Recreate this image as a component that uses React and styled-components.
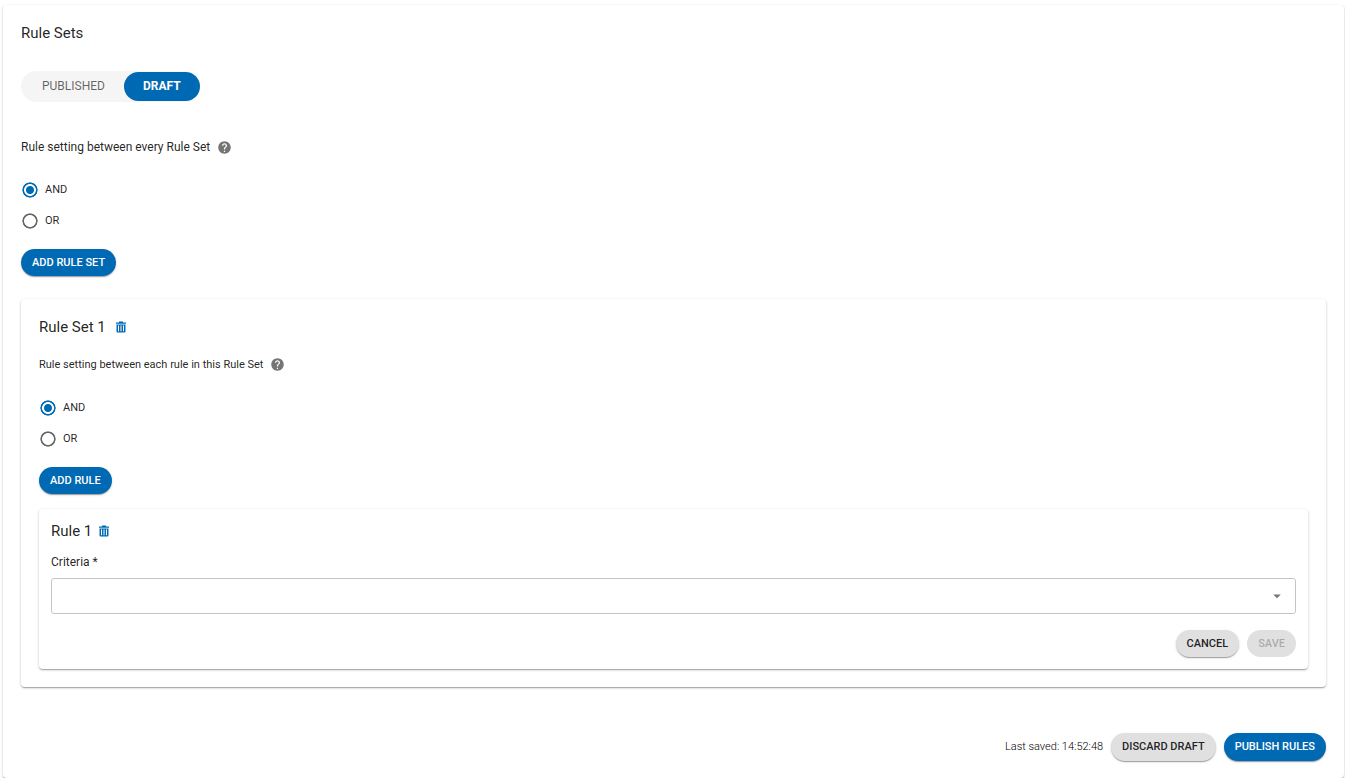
import React, { useState } from 'react';
import styled, { createGlobalStyle } from 'styled-components';
import { MdHelp, MdArrowDropDown } from 'react-icons/md';

const GlobalStyle = createGlobalStyle`
  * {
    box-sizing: border-box;
  }

  body {
    margin: 0;
    padding: 5px 1px 0 3px;
    background-color: #fff;
    color: rgba(0, 0, 0, 0.87);
    font-family: Roboto, Arial, sans-serif;
    font-size: 11px;
  }

  button, select {
    font-family: inherit;
  }
`;

const Card = styled.section`
  background-color: #fff;
  border-radius: 4px;
  box-shadow: 0 1px 3px 0 rgba(0, 0, 0, 0.2),
    0 1px 1px 0 rgba(0, 0, 0, 0.14),
    0 2px 1px -1px rgba(0, 0, 0, 0.12);
`;

const PageCard = styled(Card)`
  padding: 18px 18px 17px;
`;

const RuleSetCard = styled(Card)`
  margin-top: 23px;
  padding: 18px;
`;

const RuleCard = styled(Card)`
  margin-top: 15px;
  padding: 12px;
`;

const Title = styled.h2`
  margin: 0;
  font-size: 15px;
  font-weight: 400;
  line-height: 20px;
`;

const TitleRow = styled.div`
  display: flex;
  align-items: center;
  gap: ${(props) => props.$gap}px;
`;

const IconButton = styled.button`
  display: flex;
  padding: 0;
  border: none;
  background: none;
  color: #0069b4;
  cursor: pointer;
`;

const HelpButton = styled(IconButton)`
  color: #757575;
`;

const Toggle = styled.div`
  display: flex;
  align-items: center;
  width: fit-content;
  height: 31px;
  margin-top: 28px;
  border-radius: 16px;
  background-color: #f5f5f5;
`;

const ToggleButton = styled.button`
  height: 29px;
  padding: 0 19px 2px;
  border: none;
  border-radius: 15px;
  background-color: ${(props) => (props.$active ? '#0069b4' : 'transparent')};
  color: ${(props) => (props.$active ? '#fff' : 'rgba(0, 0, 0, 0.6)')};
  font-size: 12px;
  font-weight: ${(props) => (props.$active ? 700 : 400)};
  text-transform: uppercase;
  cursor: pointer;

  &:first-child {
    padding-left: 21px;
  }
`;

const RadioGroup = styled.fieldset`
  min-width: 0;
  margin: ${(props) => (props.$nested ? 17 : 35)}px 0 0;
  padding: 0;
  border: none;
`;

const Legend = styled.legend`
  display: flex;
  align-items: center;
  gap: 7px;
  height: 20px;
  margin-bottom: ${(props) => (props.$nested ? 18 : 17)}px;
  padding: 0;
  font-size: ${(props) => (props.$nested ? 11 : 12)}px;
`;

const RadioLabel = styled.label`
  display: flex;
  align-items: center;
  gap: 7px;
  width: fit-content;
  height: 31px;
  padding-left: 1px;
  cursor: pointer;
`;

const Radio = styled.input`
  appearance: none;
  width: 16px;
  height: 16px;
  margin: 0;
  border-radius: 50%;
  background: radial-gradient(circle closest-side, transparent 69%, #666 79%, #666 91%, transparent 100%);

  &:checked {
    background: radial-gradient(
      circle closest-side,
      #0069b4 44%,
      transparent 56%,
      transparent 69%,
      #0069b4 79%,
      #0069b4 91%,
      transparent 100%
    );
  }
`;

const Button = styled.button`
  height: ${(props) => (props.$tall ? 28 : 27)}px;
  padding: ${(props) => (props.$tall ? '0 11px 2px' : '0 11px')};
  border: none;
  border-radius: 14px;
  background-color: ${(props) => (props.$primary ? '#0069b4' : '#e0e0e0')};
  color: ${(props) => (props.$primary ? '#fff' : 'rgba(0, 0, 0, 0.87)')};
  font-size: 11px;
  font-weight: 500;
  text-transform: uppercase;
  cursor: pointer;
  box-shadow: 0 2px 1px -1px rgba(0, 0, 0, 0.2),
    0 1px 1px 0 rgba(0, 0, 0, 0.14),
    0 1px 3px 0 rgba(0, 0, 0, 0.12);

  &:disabled {
    color: rgba(0, 0, 0, 0.26);
    box-shadow: none;
    cursor: default;
  }
`;

const AddButton = styled(Button)`
  display: block;
  margin-top: 13px;
`;

const FieldLabel = styled.label`
  display: block;
  margin: 13px 0 8px;
  font-size: 12px;
  line-height: 16px;
`;

const SelectBox = styled.div`
  display: grid;
  align-items: center;

  & > * {
    grid-area: 1 / 1;
  }

  svg {
    justify-self: end;
    margin-right: 10px;
    color: #757575;
    pointer-events: none;
  }
`;

const Select = styled.select`
  appearance: none;
  width: 100%;
  height: 36px;
  padding: 0 32px 0 12px;
  border: 1px solid #c4c4c4;
  border-radius: 3px;
  background-color: #fff;
  font-size: 12px;
`;

const Actions = styled.div`
  display: flex;
  align-items: center;
  justify-content: flex-end;
  gap: 8px;
  margin-top: ${(props) => (props.$footer ? 46 : 16)}px;
`;

const SavedAt = styled.span`
  padding-bottom: 2px;
  color: #000;
  font-weight: 300;
`;

const TrashIcon = () => (
  <svg width="10" height="12" viewBox="0 0 10 12" fill="currentColor" aria-hidden="true">
    <path d="M3 0.5h4v1h3v1.3H0V1.5h3z" />
    <path
      fillRule="evenodd"
      d="M0.5 3.4h9v7.2a1 1 0 0 1-1 1H1.5a1 1 0 0 1-1-1zM2 4.6v5.7h1V4.6zM4.5 4.6v5.7h1V4.6zM7 4.6v5.7h1V4.6z"
    />
  </svg>
);

const RuleSetting = ({ name, text, nested }) => {
  const [value, setValue] = useState('AND');

  return (
    <RadioGroup $nested={nested}>
      <Legend $nested={nested}>
        {text}
        <HelpButton type="button" aria-label="Help">
          <MdHelp size={15} />
        </HelpButton>
      </Legend>
      {['AND', 'OR'].map((option) => (
        <RadioLabel key={option}>
          <Radio
            type="radio"
            name={name}
            value={option}
            checked={value === option}
            onChange={(e) => setValue(e.target.value)}
          />
          {option}
        </RadioLabel>
      ))}
    </RadioGroup>
  );
};

const App = () => {
  const [view, setView] = useState('draft');

  return (
    <>
      <GlobalStyle />
      <PageCard as="main">
        <Title as="h1">Rule Sets</Title>
        <Toggle>
          <ToggleButton $active={view === 'published'} onClick={() => setView('published')}>
            Published
          </ToggleButton>
          <ToggleButton $active={view === 'draft'} onClick={() => setView('draft')}>
            Draft
          </ToggleButton>
        </Toggle>

        <RuleSetting name="between-sets" text="Rule setting between every Rule Set" />
        <AddButton $primary>Add rule set</AddButton>

        <RuleSetCard>
          <TitleRow $gap={10}>
            <Title>Rule Set 1</Title>
            <IconButton aria-label="Delete rule set">
              <TrashIcon />
            </IconButton>
          </TitleRow>
          <RuleSetting
            nested
            name="between-rules"
            text="Rule setting between each rule in this Rule Set"
          />
          <AddButton $primary>Add rule</AddButton>

          <RuleCard>
            <TitleRow $gap={7}>
              <Title as="h3">Rule 1</Title>
              <IconButton aria-label="Delete rule">
                <TrashIcon />
              </IconButton>
            </TitleRow>
            <FieldLabel htmlFor="criteria">Criteria *</FieldLabel>
            <SelectBox>
              <Select id="criteria" required defaultValue="">
                <option value="" />
              </Select>
              <MdArrowDropDown size={18} />
            </SelectBox>
            <Actions>
              <Button>Cancel</Button>
              <Button disabled>Save</Button>
            </Actions>
          </RuleCard>
        </RuleSetCard>

        <Actions $footer>
          <SavedAt>Last saved: 14:52:48</SavedAt>
          <Button $tall>Discard draft</Button>
          <Button $tall $primary>Publish rules</Button>
        </Actions>
      </PageCard>
    </>
  );
};

export default App;
